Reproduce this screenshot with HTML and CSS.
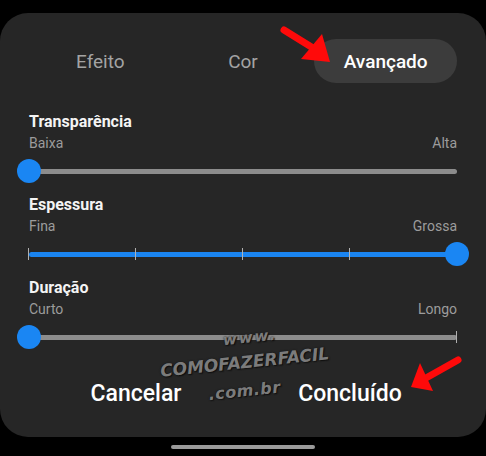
FILE: index.html
```html
<!DOCTYPE html>
<html lang="pt-BR">
<head>
<meta charset="utf-8">
<title>Avançado</title>
<link rel="stylesheet" href="styles.css">
</head>
<body>
<div class="screen">
  <div class="card">
    <div class="tabs">
      <div class="tab">Efeito</div>
      <div class="tab">Cor</div>
      <div class="tab active">Avançado</div>
    </div>

    <div class="section">
      <div class="title">Transparência</div>
      <div class="labels"><span>Baixa</span><span>Alta</span></div>
      <div class="slider">
        <div class="track"></div>
        <div class="thumb start"></div>
      </div>
    </div>

    <div class="section">
      <div class="title">Espessura</div>
      <div class="labels"><span>Fina</span><span>Grossa</span></div>
      <div class="slider">
        <div class="track blue"></div>
        <div class="tick" style="left:0%"></div>
        <div class="tick" style="left:25%"></div>
        <div class="tick" style="left:50%"></div>
        <div class="tick" style="left:75%"></div>
        <div class="thumb end"></div>
      </div>
    </div>

    <div class="section">
      <div class="title">Duração</div>
      <div class="labels"><span>Curto</span><span>Longo</span></div>
      <div class="slider">
        <div class="track"></div>
        <div class="tick" style="left:100%"></div>
        <div class="thumb start"></div>
      </div>
    </div>

    <div class="buttons">
      <div class="btn">Cancelar</div>
      <div class="btn">Concluído</div>
    </div>
  </div>
  <div class="homebar"></div>

  <div class="watermark">
    <div class="wm1">www.</div>
    <div class="wm2">COMOFAZERFACIL</div>
    <div class="wm3">.com.br</div>
  </div>

  <svg class="arrows" width="486" height="456" viewBox="0 0 486 456">
    <line x1="284" y1="30" x2="313" y2="48" stroke="#ff0a0a" stroke-width="7" stroke-linecap="round"/>
    <polygon points="322,34 301,59 330,62" fill="#ff0a0a"/>
    <line x1="458" y1="360" x2="426" y2="378" stroke="#ff0a0a" stroke-width="7" stroke-linecap="round"/>
    <polygon points="420,363 433,391 411,387" fill="#ff0a0a"/>
  </svg>
</div>
</body>
</html>
```
FILE: styles.css
```css
html, body {
  margin: 0;
  padding: 0;
  background: #000;
}
body {
  font-family: Roboto, "Liberation Sans", Arial, sans-serif;
}
.screen {
  position: relative;
  width: 486px;
  height: 456px;
  overflow: hidden;
  padding-top: 13px;
  box-sizing: border-box;
}
.card {
  width: 486px;
  height: 424px;
  box-sizing: border-box;
  background: #262626;
  border-radius: 28px;
  padding: 26px 29px 0 29px;
  display: flex;
  flex-direction: column;
}
.tabs {
  display: grid;
  grid-template-columns: 1fr 1fr 1fr;
  height: 44px;
}
.tab {
  display: flex;
  align-items: center;
  justify-content: center;
  font-size: 19px;
  color: #a3a3a3;
  border-radius: 22px;
}
.tab.active {
  background: #3c3c3c;
  color: #ffffff;
  font-weight: 500;
}
.section {
  display: flex;
  flex-direction: column;
  height: 83px;
}
.tabs + .section {
  margin-top: 29px;
}
.title {
  font-size: 16px;
  line-height: 20px;
  font-weight: 700;
  color: #f4f4f4;
}
.labels {
  display: flex;
  justify-content: space-between;
  font-size: 14px;
  line-height: 20px;
  color: #9c9c9c;
  margin-top: 1px;
}
.slider {
  position: relative;
  height: 24px;
  margin-top: 6px;
  display: flex;
  align-items: center;
}
.track {
  flex: 1;
  height: 5px;
  border-radius: 3px;
  background: #8c8c8c;
}
.track.blue {
  background: #1a84f0;
}
.tick {
  position: absolute;
  top: 6px;
  width: 1px;
  height: 12px;
  margin-left: -1px;
  background: #b0b0b0;
}
.thumb {
  position: absolute;
  top: 0;
  width: 24px;
  height: 24px;
  border-radius: 50%;
  background: #1a86f3;
}
.thumb.start { left: -12px; }
.thumb.end { right: -12px; }
.buttons {
  display: grid;
  grid-template-columns: 1fr 1fr;
  margin-top: 19px;
}
.btn {
  text-align: center;
  font-size: 23px;
  line-height: 28px;
  font-weight: 500;
  color: #ffffff;
}
.homebar {
  width: 144px;
  height: 4px;
  border-radius: 2px;
  background: #9a9a9a;
  margin: 8px 0 0 171px;
}
.watermark {
  position: absolute;
  left: 145px;
  top: 330px;
  width: 200px;
  text-align: center;
  font-family: "DejaVu Sans", sans-serif;
  font-weight: 700;
  font-style: italic;
  color: rgba(138, 138, 138, 0.9);
  text-shadow: 0 0 2px #141414, 1px 1px 1px #101010;
  transform: rotate(-6deg);
  pointer-events: none;
}
.wm1 {
  font-size: 15px;
  line-height: 16px;
  letter-spacing: 2px;
  padding-left: 16px;
}
.wm2 {
  font-size: 17px;
  line-height: 22px;
  margin-top: 5px;
}
.wm3 {
  font-size: 16px;
  line-height: 22px;
  margin-top: 7px;
  letter-spacing: 0.5px;
  padding-right: 6px;
}
.arrows {
  position: absolute;
  left: 0;
  top: 0;
}
```
